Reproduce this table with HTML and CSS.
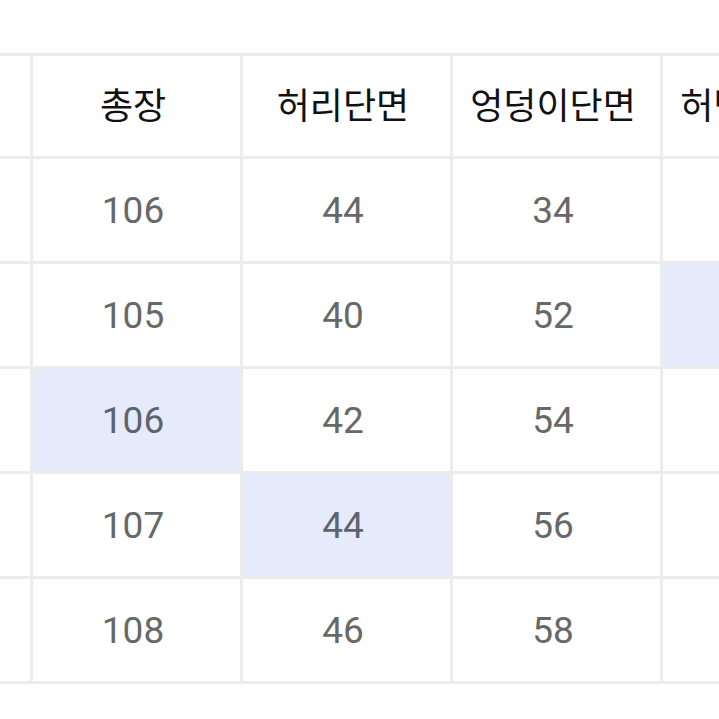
FILE: index.html
```html
<!DOCTYPE html>
<html lang="ko">
<head>
<meta charset="utf-8">
<link rel="stylesheet" href="styles.css">
</head>
<body>
<div class="table">
  <div class="cell head"></div>
  <div class="cell head">총장</div>
  <div class="cell head">허리단면</div>
  <div class="cell head">엉덩이단면</div>
  <div class="cell head">허벅지단면</div>

  <div class="cell"></div>
  <div class="cell num">106</div>
  <div class="cell num">44</div>
  <div class="cell num">34</div>
  <div class="cell num"></div>

  <div class="cell"></div>
  <div class="cell num">105</div>
  <div class="cell num">40</div>
  <div class="cell num">52</div>
  <div class="cell num hl"></div>

  <div class="cell"></div>
  <div class="cell num hl">106</div>
  <div class="cell num">42</div>
  <div class="cell num">54</div>
  <div class="cell num"></div>

  <div class="cell"></div>
  <div class="cell num">107</div>
  <div class="cell num hl">44</div>
  <div class="cell num">56</div>
  <div class="cell num"></div>

  <div class="cell"></div>
  <div class="cell num">108</div>
  <div class="cell num">46</div>
  <div class="cell num">58</div>
  <div class="cell num"></div>
</div>
</body>
</html>
```
FILE: styles.css
```css
html, body {
  margin: 0;
  padding: 0;
  background: #ffffff;
  overflow: hidden;
}
body {
  width: 719px;
  height: 719px;
}
.table {
  display: grid;
  grid-template-columns: repeat(5, 207px);
  grid-template-rows: 100px repeat(5, 102px);
  gap: 3px;
  padding: 3px;
  background: #ececec;
  width: max-content;
  margin-top: 53px;
  margin-left: -180px;
}
.cell {
  background: #ffffff;
  display: flex;
  align-items: center;
  justify-content: center;
  white-space: nowrap;
  box-sizing: border-box;
  padding-right: 7px;
}
.head {
  font-family: "Noto Sans CJK KR", "Noto Sans", sans-serif;
  font-size: 36px;
  font-weight: 400;
  color: #111111;
  padding-bottom: 6px;
}
.num {
  font-family: Roboto, "Liberation Sans", sans-serif;
  font-size: 37px;
  color: #686868;
}
.hl {
  background: #e6ebfc;
  color: #5f636d;
}
```
